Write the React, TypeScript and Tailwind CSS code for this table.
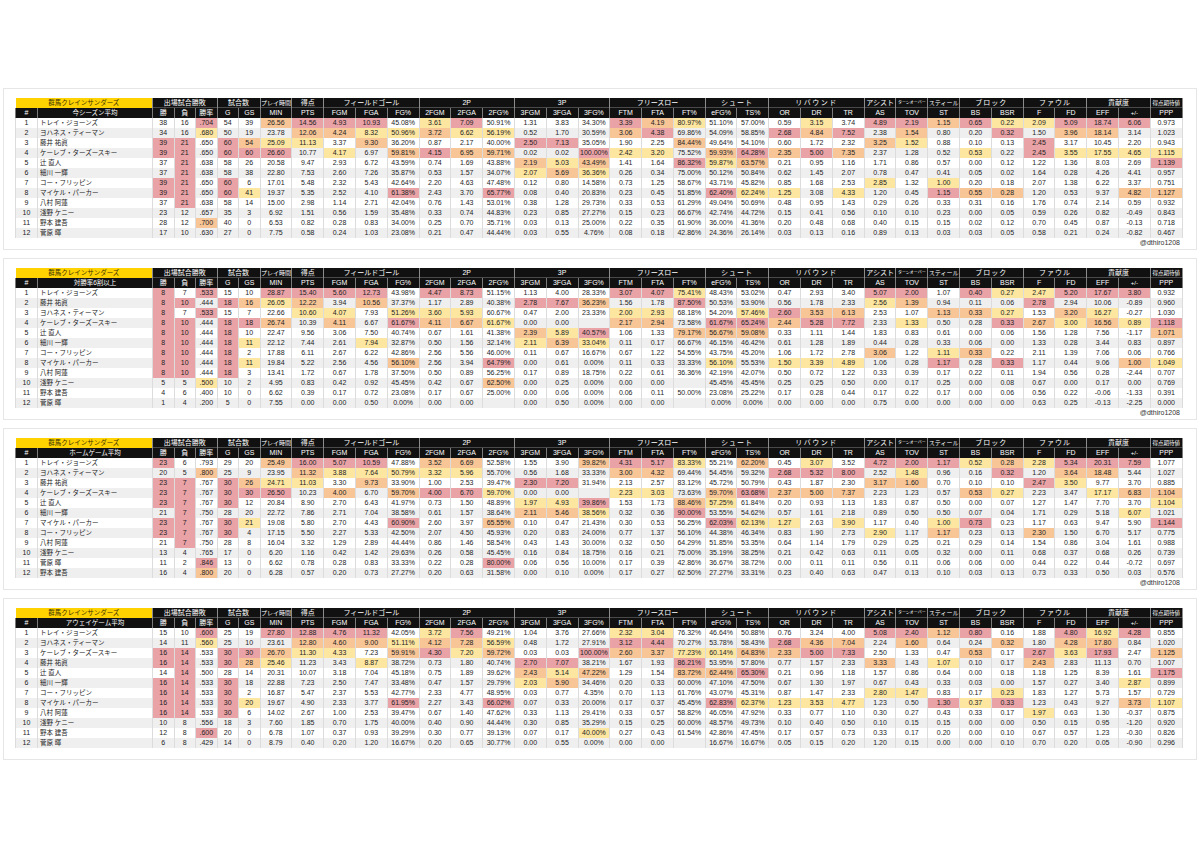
import React from 'react';

type C = 'r' | 'o' | 'y' | '';

type TableData = {
  sub: string;
  rows: string[];
  watermark: boolean;
  ov?: Record<string, C>;
};

const BG: Record<string, string> = {
  r: 'bg-[#e9a2a6]',
  o: 'bg-[#f7c596]',
  y: 'bg-[#fde6a0]',
  '': '',
};

const GROUPS: { label: string; span: number; cls: string }[] = [
  { label: '出場試合勝敗', span: 3, cls: 'text-[7px]' },
  { label: '試合数', span: 2, cls: 'text-[7px]' },
  { label: 'プレイ時間', span: 1, cls: 'text-[6px]' },
  { label: '得点', span: 1, cls: 'text-[7px]' },
  { label: 'フィールドゴール', span: 3, cls: 'text-[7px]' },
  { label: '2P', span: 3, cls: 'text-[7px]' },
  { label: '3P', span: 3, cls: 'text-[7px]' },
  { label: 'フリースロー', span: 3, cls: 'text-[7px]' },
  { label: 'シュート', span: 2, cls: 'text-[7px] tracking-[1px]' },
  { label: 'リバウンド', span: 3, cls: 'text-[7px] tracking-[1.5px]' },
  { label: 'アシスト', span: 1, cls: 'text-[7px]' },
  { label: 'ターンオーバー', span: 1, cls: 'text-[4px]' },
  { label: 'スティール', span: 1, cls: 'text-[6px]' },
  { label: 'ブロック', span: 2, cls: 'text-[7px] tracking-[1px]' },
  { label: 'ファウル', span: 2, cls: 'text-[7px] tracking-[1px]' },
  { label: '貢献度', span: 2, cls: 'text-[7px]' },
  { label: '得点期待値', span: 1, cls: 'text-[5.5px]' },
];

const LABELS = [
  '勝', '負', '勝率', 'G', 'GS', 'MIN', 'PTS', 'FGM', 'FGA', 'FG%', '2FGM', '2FGA', '2FG%',
  '3FGM', '3FGA', '3FG%', 'FTM', 'FTA', 'FT%', 'eFG%', 'TS%', 'OR', 'DR', 'TR', 'AS', 'TOV',
  'ST', 'BS', 'BSR', 'F', 'FD', 'EFF', '+/-', 'PPP',
];

const TABLES: TableData[] = [
  {
    sub: '今シーズン平均',
    watermark: true,
    ov: { '0,26': 'o', '3,28': '' },
    rows: [
      '1|トレイ・ジョーンズ|38 16 .704 54 39 26.56 14.56 4.93 10.93 45.08% 3.61 7.09 50.91% 1.31 3.83 34.30% 3.39 4.19 80.97% 51.10% 57.00% 0.59 3.15 3.74 4.89 2.19 1.15 0.65 0.22 2.09 5.09 18.74 6.06 0.973',
      '2|ヨハネス・ティーマン|34 16 .680 50 19 23.78 12.06 4.24 8.32 50.96% 3.72 6.62 56.19% 0.52 1.70 30.59% 3.06 4.38 69.86% 54.09% 58.85% 2.68 4.84 7.52 2.38 1.54 0.80 0.20 0.32 1.50 3.96 18.14 3.14 1.023',
      '3|藤井 祐眞|39 21 .650 60 54 25.09 11.13 3.37 9.30 36.20% 0.87 2.17 40.00% 2.50 7.13 35.05% 1.90 2.25 84.44% 49.64% 54.10% 0.60 1.72 2.32 3.25 1.52 0.88 0.10 0.13 2.45 3.17 10.45 2.20 0.943',
      '4|ケーレブ・ターズースキー|39 21 .650 60 60 26.60 10.77 4.17 6.97 59.81% 4.15 6.95 59.71% 0.02 0.02 100.00% 2.42 3.20 75.52% 59.93% 64.28% 2.35 5.00 7.35 2.37 1.28 0.52 0.53 0.22 2.45 3.55 17.55 4.65 1.115',
      '5|辻 直人|37 21 .638 58 26 20.58 9.47 2.93 6.72 43.59% 0.74 1.69 43.88% 2.19 5.03 43.49% 1.41 1.64 86.32% 59.87% 63.57% 0.21 0.95 1.16 1.71 0.86 0.57 0.00 0.12 1.22 1.36 8.03 2.69 1.139',
      '6|細川 一輝|37 21 .638 58 38 22.80 7.53 2.60 7.26 35.87% 0.53 1.57 34.07% 2.07 5.69 36.36% 0.26 0.34 75.00% 50.12% 50.84% 0.62 1.45 2.07 0.78 0.47 0.41 0.05 0.02 1.64 0.28 4.26 4.41 0.957',
      '7|コー・フリッピン|39 21 .650 60 6 17.01 5.48 2.32 5.43 42.64% 2.20 4.63 47.48% 0.12 0.80 14.58% 0.73 1.25 58.67% 43.71% 45.82% 0.85 1.68 2.53 2.85 1.32 1.00 0.20 0.18 2.07 1.38 6.22 3.37 0.751',
      '8|マイケル・パーカー|39 21 .650 60 41 19.37 5.35 2.52 4.10 61.38% 2.43 3.70 65.77% 0.08 0.40 20.83% 0.23 0.45 51.85% 62.40% 62.24% 1.25 3.08 4.33 1.20 0.45 1.15 0.55 0.28 1.20 0.53 9.37 4.82 1.127',
      '9|八村 阿蓮|37 21 .638 58 14 15.00 2.98 1.14 2.71 42.04% 0.76 1.43 53.01% 0.38 1.28 29.73% 0.33 0.53 61.29% 49.04% 50.69% 0.48 0.95 1.43 0.29 0.26 0.33 0.31 0.16 1.76 0.74 2.14 0.59 0.932',
      '10|淺野 ケニー|23 12 .657 35 3 6.92 1.51 0.56 1.59 35.48% 0.33 0.74 44.83% 0.23 0.85 27.27% 0.15 0.23 66.67% 42.74% 44.72% 0.15 0.41 0.56 0.10 0.10 0.23 0.00 0.05 0.59 0.26 0.82 -0.49 0.843',
      '11|野本 建吾|28 12 .700 40 0 6.53 0.82 0.28 0.83 34.00% 0.25 0.70 35.71% 0.03 0.13 25.00% 0.22 0.35 61.90% 36.00% 41.36% 0.20 0.48 0.68 0.40 0.15 0.15 0.02 0.12 0.70 0.45 0.87 -0.13 0.718',
      '12|菅原 暉|17 10 .630 27 0 7.75 0.58 0.24 1.03 23.08% 0.21 0.47 44.44% 0.03 0.55 4.76% 0.08 0.18 42.86% 24.36% 26.14% 0.03 0.13 0.16 0.89 0.13 0.03 0.03 0.05 0.58 0.21 0.24 -0.82 0.467',
    ],
  },
  {
    sub: '対勝率6割以上',
    watermark: true,
    rows: [
      '1|トレイ・ジョーンズ|8 7 .533 15 10 28.87 15.40 5.60 12.73 43.98% 4.47 8.73 51.15% 1.13 4.00 28.33% 3.07 4.07 75.41% 48.43% 53.02% 0.47 2.93 3.40 5.07 2.00 1.07 0.40 0.27 2.47 5.20 17.67 3.80 0.932',
      '2|藤井 祐眞|8 10 .444 18 16 26.05 12.22 3.94 10.56 37.37% 1.17 2.89 40.38% 2.78 7.67 36.23% 1.56 1.78 87.50% 50.53% 53.90% 0.56 1.78 2.33 2.56 1.39 0.94 0.11 0.06 2.78 2.94 10.06 -0.89 0.960',
      '3|ヨハネス・ティーマン|8 7 .533 15 7 22.66 10.60 4.07 7.93 51.26% 3.60 5.93 60.67% 0.47 2.00 23.33% 2.00 2.93 68.18% 54.20% 57.46% 2.60 3.53 6.13 2.53 1.07 1.13 0.33 0.27 1.53 3.20 16.27 -0.27 1.030',
      '4|ケーレブ・ターズースキー|8 10 .444 18 18 26.74 10.39 4.11 6.67 61.67% 4.11 6.67 61.67% 0.00 0.00 - 2.17 2.94 73.58% 61.67% 65.24% 2.44 5.28 7.72 2.33 1.33 0.50 0.28 0.33 2.67 3.00 16.56 0.89 1.118',
      '5|辻 直人|8 10 .444 18 10 22.47 9.56 3.06 7.50 40.74% 0.67 1.61 41.38% 2.39 5.89 40.57% 1.06 1.33 79.17% 56.67% 59.08% 0.33 1.11 1.44 1.83 0.83 0.61 0.00 0.06 1.56 1.28 7.56 -1.17 1.071',
      '6|細川 一輝|8 10 .444 18 11 22.12 7.44 2.61 7.94 32.87% 0.50 1.56 32.14% 2.11 6.39 33.04% 0.11 0.17 66.67% 46.15% 46.42% 0.61 1.28 1.89 0.44 0.28 0.33 0.06 0.00 1.33 0.28 3.44 0.83 0.897',
      '7|コー・フリッピン|8 10 .444 18 2 17.88 6.11 2.67 6.22 42.86% 2.56 5.56 46.00% 0.11 0.67 16.67% 0.67 1.22 54.55% 43.75% 45.20% 1.06 1.72 2.78 3.06 1.22 1.11 0.33 0.22 2.11 1.39 7.06 0.06 0.766',
      '8|マイケル・パーカー|8 10 .444 18 11 19.84 5.22 2.56 4.56 56.10% 2.56 3.94 64.79% 0.00 0.61 0.00% 0.11 0.33 33.33% 56.10% 55.53% 1.50 3.39 4.89 1.06 0.28 1.17 0.28 0.33 1.17 0.44 9.06 1.00 1.049',
      '9|八村 阿蓮|8 10 .444 18 3 13.41 1.72 0.67 1.78 37.50% 0.50 0.89 56.25% 0.17 0.89 18.75% 0.22 0.61 36.36% 42.19% 42.07% 0.50 0.72 1.22 0.33 0.39 0.17 0.22 0.11 1.94 0.56 0.28 -2.44 0.707',
      '10|淺野 ケニー|5 5 .500 10 2 4.95 0.83 0.42 0.92 45.45% 0.42 0.67 62.50% 0.00 0.25 0.00% 0.00 0.00 - 45.45% 45.45% 0.25 0.25 0.50 0.00 0.17 0.25 0.00 0.08 0.67 0.00 0.17 0.00 0.769',
      '11|野本 建吾|4 6 .400 10 0 6.62 0.39 0.17 0.72 23.08% 0.17 0.67 25.00% 0.00 0.06 0.00% 0.06 0.11 50.00% 23.08% 25.22% 0.17 0.28 0.44 0.17 0.22 0.17 0.00 0.06 0.56 0.22 -0.06 -1.33 0.391',
      '12|菅原 暉|1 4 .200 5 0 7.55 0.00 0.00 0.50 0.00% 0.00 0.00 - 0.00 0.50 0.00% 0.00 0.00 - 0.00% 0.00% 0.00 0.00 0.00 0.75 0.00 0.00 0.00 0.00 0.63 0.25 -0.13 -2.25 0.000',
    ],
  },
  {
    sub: 'ホームゲーム平均',
    watermark: true,
    ov: { '7,26': 'o', '4,33': 'y' },
    rows: [
      '1|トレイ・ジョーンズ|23 6 .793 29 20 25.49 16.00 5.07 10.59 47.88% 3.52 6.69 52.58% 1.55 3.90 39.82% 4.31 5.17 83.33% 55.21% 62.20% 0.45 3.07 3.52 4.72 2.00 1.17 0.52 0.28 2.28 5.34 20.31 7.59 1.077',
      '2|ヨハネス・ティーマン|20 5 .800 25 9 23.95 11.32 3.88 7.64 50.79% 3.32 5.96 55.70% 0.56 1.68 33.33% 3.00 4.32 69.44% 54.45% 59.32% 2.68 5.32 8.00 2.52 1.48 0.96 0.16 0.32 1.20 3.64 18.48 5.44 1.027',
      '3|藤井 祐眞|23 7 .767 30 26 24.71 11.03 3.30 9.73 33.90% 1.00 2.53 39.47% 2.30 7.20 31.94% 2.13 2.57 83.12% 45.72% 50.79% 0.43 1.87 2.30 3.17 1.60 0.70 0.10 0.10 2.47 3.50 9.77 3.70 0.885',
      '4|ケーレブ・ターズースキー|23 7 .767 30 30 26.50 10.23 4.00 6.70 59.70% 4.00 6.70 59.70% 0.00 0.00 - 2.23 3.03 73.63% 59.70% 63.68% 2.37 5.00 7.37 2.23 1.23 0.57 0.53 0.27 2.23 3.47 17.17 6.83 1.104',
      '5|辻 直人|23 7 .767 30 12 20.84 8.90 2.70 6.43 41.97% 0.73 1.50 48.89% 1.97 4.93 39.86% 1.53 1.73 88.46% 57.25% 61.84% 0.20 0.93 1.13 1.83 0.87 0.50 0.00 0.07 1.27 1.47 7.70 3.70 1.104',
      '6|細川 一輝|21 7 .750 28 20 22.72 7.86 2.71 7.04 38.58% 0.61 1.57 38.64% 2.11 5.46 38.56% 0.32 0.36 90.00% 53.55% 54.62% 0.57 1.61 2.18 0.89 0.50 0.50 0.07 0.04 1.71 0.29 5.18 6.07 1.021',
      '7|マイケル・パーカー|23 7 .767 30 21 19.08 5.80 2.70 4.43 60.90% 2.60 3.97 65.55% 0.10 0.47 21.43% 0.30 0.53 56.25% 62.03% 62.13% 1.27 2.63 3.90 1.17 0.40 1.00 0.73 0.23 1.17 0.63 9.47 5.90 1.144',
      '8|コー・フリッピン|23 7 .767 30 4 17.15 5.50 2.27 5.33 42.50% 2.07 4.50 45.93% 0.20 0.83 24.00% 0.77 1.37 56.10% 44.38% 46.34% 0.83 1.90 2.73 2.90 1.17 1.17 0.23 0.13 2.30 1.50 6.70 5.17 0.775',
      '9|八村 阿蓮|21 7 .750 28 8 16.04 3.32 1.29 2.89 44.44% 0.86 1.46 58.54% 0.43 1.43 30.00% 0.32 0.50 64.29% 51.85% 53.35% 0.64 1.14 1.79 0.29 0.25 0.21 0.29 0.14 1.54 0.86 3.04 1.61 0.988',
      '10|淺野 ケニー|13 4 .765 17 0 6.20 1.16 0.42 1.42 29.63% 0.26 0.58 45.45% 0.16 0.84 18.75% 0.16 0.21 75.00% 35.19% 38.25% 0.21 0.42 0.63 0.11 0.05 0.32 0.00 0.11 0.68 0.37 0.68 0.26 0.739',
      '11|菅原 暉|11 2 .846 13 0 6.62 0.78 0.28 0.83 33.33% 0.22 0.28 80.00% 0.06 0.56 10.00% 0.17 0.39 42.86% 36.67% 38.72% 0.00 0.11 0.11 0.56 0.11 0.06 0.06 0.00 0.44 0.22 0.44 -0.72 0.697',
      '12|野本 建吾|16 4 .800 20 0 6.28 0.57 0.20 0.73 27.27% 0.20 0.63 31.58% 0.00 0.10 0.00% 0.17 0.27 62.50% 27.27% 33.31% 0.23 0.40 0.63 0.47 0.13 0.10 0.03 0.13 0.73 0.33 0.50 0.03 0.576',
    ],
  },
  {
    sub: 'アウェイゲーム平均',
    watermark: false,
    rows: [
      '1|トレイ・ジョーンズ|15 10 .600 25 19 27.80 12.88 4.76 11.32 42.05% 3.72 7.56 49.21% 1.04 3.76 27.66% 2.32 3.04 76.32% 46.64% 50.88% 0.76 3.24 4.00 5.08 2.40 1.12 0.80 0.16 1.88 4.80 16.92 4.28 0.855',
      '2|ヨハネス・ティーマン|14 11 .560 25 10 23.61 12.80 4.60 9.00 51.11% 4.12 7.28 56.59% 0.48 1.72 27.91% 3.12 4.44 70.27% 53.78% 58.43% 2.68 4.36 7.04 2.24 1.60 0.64 0.24 0.32 1.80 4.28 17.80 0.84 1.020',
      '3|ケーレブ・ターズースキー|16 14 .533 30 30 26.70 11.30 4.33 7.23 59.91% 4.30 7.20 59.72% 0.03 0.03 100.00% 2.60 3.37 77.23% 60.14% 64.83% 2.33 5.00 7.33 2.50 1.33 0.47 0.53 0.17 2.67 3.63 17.93 2.47 1.125',
      '4|藤井 祐眞|16 14 .533 30 28 25.46 11.23 3.43 8.87 38.72% 0.73 1.80 40.74% 2.70 7.07 38.21% 1.67 1.93 86.21% 53.95% 57.80% 0.77 1.57 2.33 3.33 1.43 1.07 0.10 0.17 2.43 2.83 11.13 0.70 1.007',
      '5|辻 直人|14 14 .500 28 14 20.31 10.07 3.18 7.04 45.18% 0.75 1.89 39.62% 2.43 5.14 47.22% 1.29 1.54 83.72% 62.44% 65.30% 0.21 0.96 1.18 1.57 0.86 0.64 0.00 0.18 1.18 1.25 8.39 1.61 1.175',
      '6|細川 一輝|16 14 .533 30 18 22.88 7.23 2.50 7.47 33.48% 0.47 1.57 29.79% 2.03 5.90 34.46% 0.20 0.33 60.00% 47.10% 47.50% 0.67 1.30 1.97 0.67 0.43 0.33 0.03 0.00 1.57 0.27 3.40 2.87 0.899',
      '7|コー・フリッピン|16 14 .533 30 2 16.87 5.47 2.37 5.53 42.77% 2.33 4.77 48.95% 0.03 0.77 4.35% 0.70 1.13 61.76% 43.07% 45.31% 0.87 1.47 2.33 2.80 1.47 0.83 0.17 0.23 1.83 1.27 5.73 1.57 0.729',
      '8|マイケル・パーカー|16 14 .533 30 20 19.67 4.90 2.33 3.77 61.95% 2.27 3.43 66.02% 0.07 0.33 20.00% 0.17 0.37 45.45% 62.83% 62.37% 1.23 3.53 4.77 1.23 0.50 1.30 0.37 0.33 1.23 0.43 9.27 3.73 1.107',
      '9|八村 阿蓮|16 14 .533 30 6 14.02 2.67 1.00 2.53 39.47% 0.67 1.40 47.62% 0.33 1.13 29.41% 0.33 0.57 58.82% 46.05% 47.92% 0.33 0.77 1.10 0.30 0.27 0.43 0.33 0.17 1.97 0.63 1.30 -0.37 0.875',
      '10|淺野 ケニー|10 8 .556 18 3 7.60 1.85 0.70 1.75 40.00% 0.40 0.90 44.44% 0.30 0.85 35.29% 0.15 0.25 60.00% 48.57% 49.73% 0.10 0.40 0.50 0.10 0.15 0.15 0.00 0.00 0.50 0.15 0.95 -1.20 0.920',
      '11|野本 建吾|12 8 .600 20 0 6.78 1.07 0.37 0.93 39.29% 0.30 0.77 39.13% 0.07 0.17 40.00% 0.27 0.43 61.54% 42.86% 47.45% 0.17 0.57 0.73 0.33 0.17 0.20 0.00 0.10 0.67 0.57 1.23 -0.30 0.826',
      '12|菅原 暉|6 8 .429 14 0 8.79 0.40 0.20 1.20 16.67% 0.20 0.65 30.77% 0.00 0.55 0.00% 0.00 0.00 - 16.67% 16.67% 0.05 0.15 0.20 1.20 0.15 0.00 0.00 0.10 0.70 0.20 0.05 -0.90 0.296',
    ],
  },
];

const cellBase = 'p-0 h-[10px] leading-[10px] text-center whitespace-nowrap overflow-hidden';

function StatTable({ t }: { t: TableData }) {
  const parsed = t.rows.map((r) => {
    const [n, name, vals] = r.split('|');
    return { n, name, vals: vals.split(' ').map((v) => (v === '-' ? '' : v)) };
  });
  const colors: C[][] = parsed.map(() => Array(34).fill('') as C[]);
  for (let c = 0; c < 34; c++) {
    const nums = parsed.map((p) => (p.vals[c] === '' ? NaN : parseFloat(p.vals[c].replace('%', ''))));
    nums.forEach((v, i) => {
      if (isNaN(v)) return;
      const rank = 1 + nums.filter((x) => !isNaN(x) && x > v).length;
      colors[i][c] = rank === 1 ? 'r' : rank === 2 ? 'o' : rank === 3 ? 'y' : '';
    });
  }
  Object.entries(t.ov ?? {}).forEach(([k, v]) => {
    const [r, c] = k.split(',').map(Number);
    colors[r][c] = v;
  });

  return (
    <table className="table-fixed border-collapse w-[1167px]">
      <colgroup>
        <col className="w-[22px]" />
        <col className="w-[115px]" />
        {Array.from({ length: 5 }).map((_, i) => (
          <col key={'a' + i} className="w-[21.5px]" />
        ))}
        {Array.from({ length: 29 }).map((_, i) => (
          <col key={'b' + i} className="w-[31.8px]" />
        ))}
      </colgroup>
      <thead>
        <tr>
          <th
            colSpan={2}
            className={`${cellBase} bg-[#ffd200] text-[#3b3100] text-[6.5px] font-normal border-r border-[#8c8c8c]`}
          >
            群馬クレインサンダーズ
          </th>
          {GROUPS.map((g) => (
            <th
              key={g.label}
              colSpan={g.span}
              className={`${cellBase} ${g.cls} bg-[#111111] text-white font-normal border-x border-[#8c8c8c] shadow-[inset_0_-1px_0_#4a4a4a]`}
            >
              {g.label}
            </th>
          ))}
        </tr>
        <tr>
          <th className={`${cellBase} text-[7px] bg-[#111111] text-white font-normal border-x border-[#7a7a7a]`}>#</th>
          <th className={`${cellBase} text-[6.5px] bg-[#111111] text-white font-normal border-x border-[#7a7a7a]`}>
            {t.sub}
          </th>
          {LABELS.map((l) => (
            <th
              key={l}
              className={`${cellBase} ${l === '+/-' ? 'text-[6px]' : 'text-[7px]'} bg-[#111111] text-white font-normal border-x border-[#7a7a7a]`}
            >
              {l}
            </th>
          ))}
        </tr>
      </thead>
      <tbody>
        {parsed.map((p, i) => (
          <tr key={i} className={i % 2 === 0 ? 'bg-white' : 'bg-[#efefef]'}>
            <td className={`${cellBase} text-[7px] text-[#222] border-x border-[#dcdcdc]`}>{p.n}</td>
            <td className={`${cellBase} text-[6.5px] text-[#222] text-left pl-[2px] border-x border-[#dcdcdc]`}>
              {p.name}
            </td>
            {p.vals.map((v, c) => (
              <td key={c} className={`${cellBase} text-[7px] text-[#1e1e1e] border-x border-[#dcdcdc] ${BG[colors[i][c]]}`}>
                {v}
              </td>
            ))}
          </tr>
        ))}
      </tbody>
    </table>
  );
}

export default function App() {
  return (
    <div className="w-[1200px] min-h-[848px] bg-white pt-[88px] font-['Liberation_Sans','Noto_Sans_CJK_JP',sans-serif]">
      <div className="flex flex-col gap-[8px]">
        {TABLES.map((t, i) => (
          <div key={i} className="mx-[3px] border border-[#e6e6e6] pt-[9px] pl-[11px] pb-[1px]">
            <StatTable t={t} />
            <div className="w-[1167px] h-[10px] leading-[10px] text-[7px] text-right pr-[2px] text-[#333]">
              {t.watermark ? '@dthiro1208' : ''}
            </div>
          </div>
        ))}
      </div>
    </div>
  );
}
